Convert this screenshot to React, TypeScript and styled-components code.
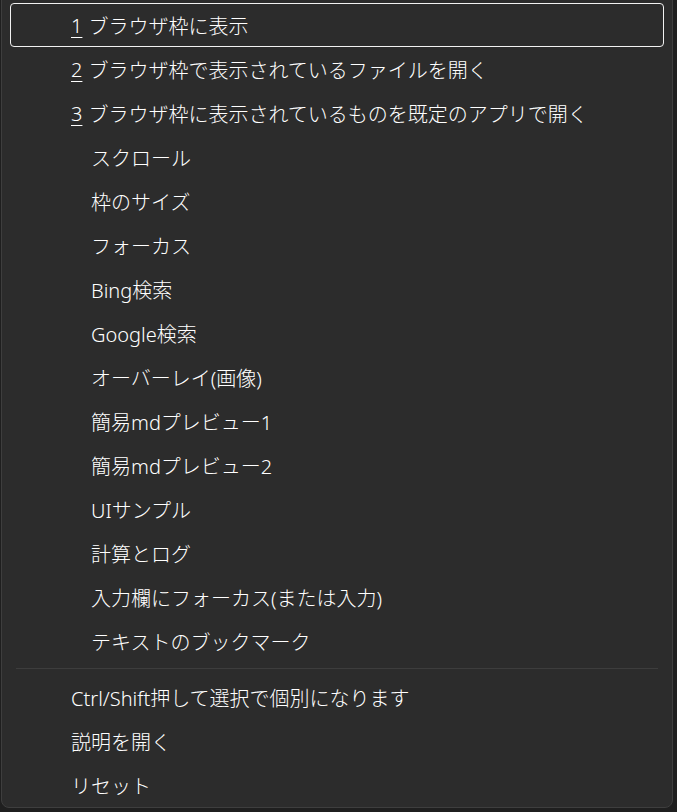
import styled, { createGlobalStyle } from "styled-components";

const GlobalStyle = createGlobalStyle`
  html, body {
    margin: 0;
    padding: 0;
    background: #1f1f1f;
    overflow: hidden;
  }
  body {
    font-family: "Noto Sans", "Noto Sans CJK JP", sans-serif;
  }
`;

const Panel = styled.div`
  box-sizing: border-box;
  width: 672px;
  height: 818px;
  margin: -10px 0 0 1px;
  padding: 12px 8px 0 8px;
  background: #2c2c2c;
  border: 1px solid #3e3e3e;
  border-radius: 8px;
  display: flex;
  flex-direction: column;
`;

const Item = styled.div<{ $indent: number; $focused?: boolean }>`
  box-sizing: border-box;
  height: 44px;
  display: flex;
  align-items: center;
  padding-left: ${p => p.$indent}px;
  color: #ffffff;
  font-size: 20px;
  font-weight: 300;
  white-space: nowrap;
  border-radius: 4px;
  border: 1px solid ${p => (p.$focused ? "#f2f2f2" : "transparent")};
`;

const Key = styled.span`
  text-decoration: underline;
  text-decoration-thickness: 1px;
  text-underline-offset: 4px;
  margin-right: 6px;
`;

const Separator = styled.div`
  height: 1px;
  margin: 5px 6px 6px;
  background: #3d3d3d;
`;

const numbered = [
  "ブラウザ枠に表示",
  "ブラウザ枠で表示されているファイルを開く",
  "ブラウザ枠に表示されているものを既定のアプリで開く",
];

const plain = [
  "スクロール",
  "枠のサイズ",
  "フォーカス",
  "Bing検索",
  "Google検索",
  "オーバーレイ(画像)",
  "簡易mdプレビュー1",
  "簡易mdプレビュー2",
  "UIサンプル",
  "計算とログ",
  "入力欄にフォーカス(または入力)",
  "テキストのブックマーク",
];

const footer = ["Ctrl/Shift押して選択で個別になります", "説明を開く", "リセット"];

const App = () => {
  return (
    <>
      <GlobalStyle />
      <Panel>
        {numbered.map((label, i) => (
          <Item key={label} $indent={60} $focused={i === 0}>
            <Key>{i + 1}</Key>
            {label}
          </Item>
        ))}
        {plain.map(label => (
          <Item key={label} $indent={80}>
            {label}
          </Item>
        ))}
        <Separator />
        {footer.map(label => (
          <Item key={label} $indent={60}>
            {label}
          </Item>
        ))}
      </Panel>
    </>
  );
};

export default App;
